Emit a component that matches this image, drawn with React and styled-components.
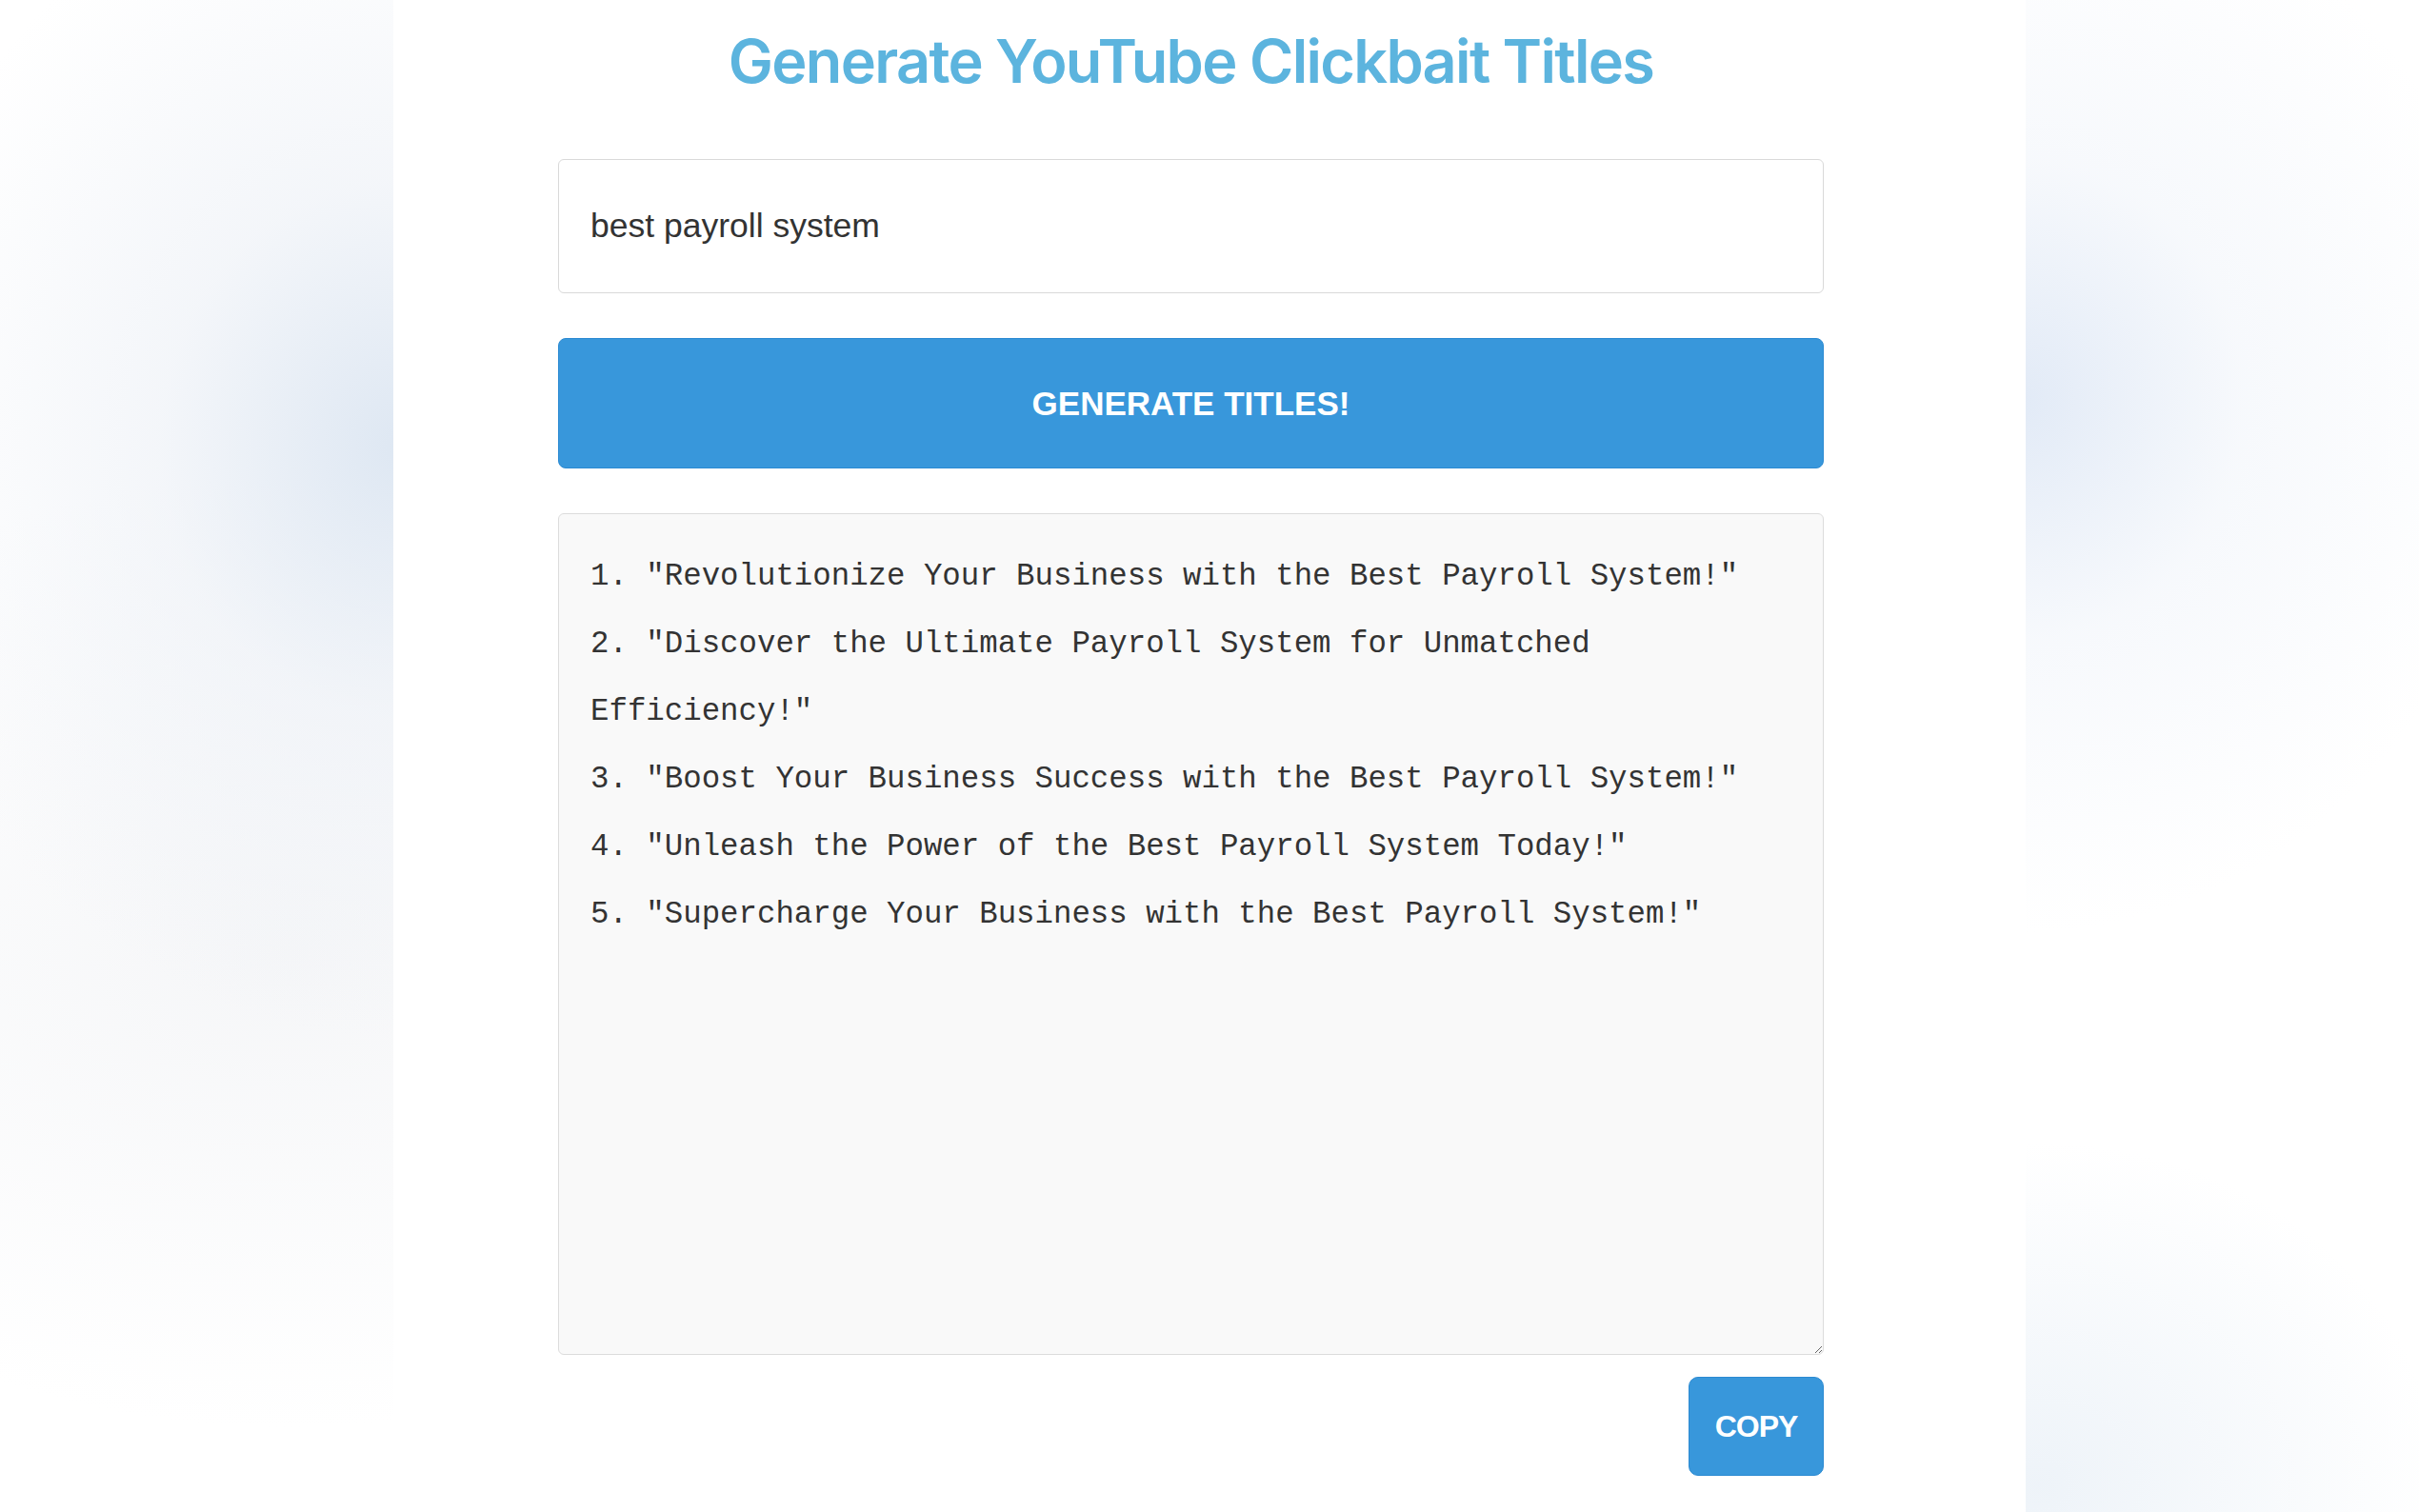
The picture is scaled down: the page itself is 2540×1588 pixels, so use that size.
import React, { useState } from 'react';
import styled, { createGlobalStyle } from 'styled-components';

const GlobalStyle = createGlobalStyle`
  html, body {
    margin: 0;
    padding: 0;
  }
  body {
    min-height: 100vh;
    background-color: #ffffff;
    background-image:
      radial-gradient(ellipse 560px 620px at 420px 470px, rgba(220, 230, 242, 0.95), rgba(236, 240, 246, 0.6) 45%, rgba(255, 255, 255, 0) 100%),
      radial-gradient(ellipse 520px 560px at 2120px 420px, rgba(224, 233, 246, 0.95), rgba(240, 244, 250, 0.55) 45%, rgba(255, 255, 255, 0) 100%),
      radial-gradient(ellipse 420px 360px at 2140px 1560px, rgba(236, 242, 248, 0.9), rgba(255, 255, 255, 0) 100%),
      radial-gradient(ellipse 700px 500px at 300px 1000px, rgba(244, 245, 247, 0.9), rgba(255, 255, 255, 0) 100%);
    background-repeat: no-repeat;
    font-family: "Liberation Sans", Arial, sans-serif;
  }
`;

const Page = styled.div`
  display: flex;
  justify-content: center;
  min-height: 100vh;
`;

const Column = styled.main`
  box-sizing: border-box;
  width: 1714px;
  min-height: 100vh;
  background: #ffffff;
  padding: 26px 212px 40px 173px;
  display: flex;
  flex-direction: column;
`;

const Title = styled.h1`
  margin: 0 0 65px;
  text-align: center;
  font-family: Inter, Lato, sans-serif;
  font-weight: 600;
  font-size: 63px;
  line-height: 76px;
  color: #5cb4de;
  letter-spacing: -1.7px;
`;

const KeywordInput = styled.input`
  box-sizing: border-box;
  width: 100%;
  height: 141px;
  padding: 0 33px;
  border: 1px solid #d9d9d9;
  border-radius: 6px;
  background: #ffffff;
  font-family: "Liberation Sans", Arial, sans-serif;
  font-size: 35.5px;
  color: #333333;
  outline: none;
`;

const GenerateButton = styled.button`
  box-sizing: border-box;
  width: 100%;
  height: 137px;
  margin-top: 47px;
  border: 1px solid #2b8ad2;
  border-radius: 8px;
  background: #3897db;
  color: #ffffff;
  font-family: "Liberation Sans", Arial, sans-serif;
  font-weight: 700;
  font-size: 35px;
  text-transform: uppercase;
  cursor: pointer;
`;

const Output = styled.textarea`
  box-sizing: border-box;
  width: 100%;
  height: 884px;
  margin-top: 47px;
  padding: 30px 33px 28px;
  border: 1px solid #dcdcdc;
  border-radius: 6px;
  background: #f9f9f9;
  color: #333333;
  font-family: "Liberation Mono", "DejaVu Sans Mono", monospace;
  font-size: 32.4px;
  line-height: 71px;
  outline: none;
`;

const CopyRow = styled.div`
  display: flex;
  justify-content: flex-end;
  margin-top: 23px;
`;

const CopyButton = styled.button`
  width: 142px;
  height: 104px;
  border: 1px solid #2b8ad2;
  border-radius: 10px;
  background: #3897db;
  color: #ffffff;
  font-family: "Liberation Sans", Arial, sans-serif;
  font-weight: 700;
  font-size: 32px;
  letter-spacing: -1px;
  cursor: pointer;
`;

const titles = [
  '1. "Revolutionize Your Business with the Best Payroll System!"',
  '2. "Discover the Ultimate Payroll System for Unmatched Efficiency!"',
  '3. "Boost Your Business Success with the Best Payroll System!"',
  '4. "Unleash the Power of the Best Payroll System Today!"',
  '5. "Supercharge Your Business with the Best Payroll System!"',
];

const App = () => {
  const [keyword, setKeyword] = useState('best payroll system');

  return (
    <>
      <GlobalStyle />
      <Page>
        <Column>
          <Title>Generate YouTube Clickbait Titles</Title>
          <KeywordInput value={keyword} onChange={(e) => setKeyword(e.target.value)} />
          <GenerateButton>Generate Titles!</GenerateButton>
          <Output readOnly value={titles.join('\n')} />
          <CopyRow>
            <CopyButton>COPY</CopyButton>
          </CopyRow>
        </Column>
      </Page>
    </>
  );
};

export default App;
